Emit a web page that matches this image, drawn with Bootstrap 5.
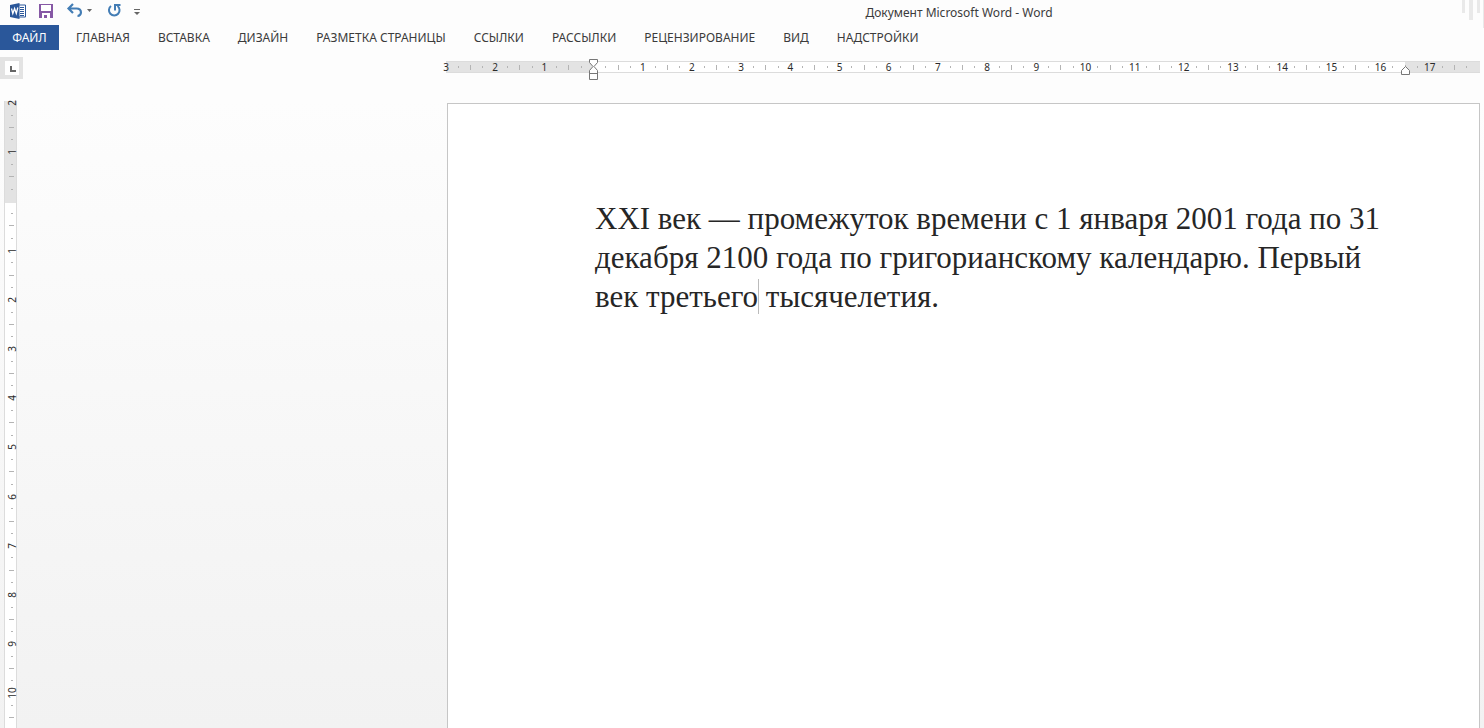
<!DOCTYPE html>
<html lang="ru">
<head>
<meta charset="utf-8">
<meta name="viewport" content="width=device-width, initial-scale=1">
<title>Документ Microsoft Word - Word</title>
<link href="https://cdn.jsdelivr.net/npm/bootstrap@5.3.0/dist/css/bootstrap.min.css" rel="stylesheet">
<style>
  body { font-family: "Noto Sans", "Open Sans", sans-serif; font-size: 12px; line-height: 16px; color: #3b3b3b; background: #fdfdfd; }
  .titlebar { height: 25px; }
  .quick { width: 458px; padding: 2px 0 0 9px; gap: 13px; height: 20px; }
  .quick .btn { border: 0; border-radius: 0; line-height: 0; }
  .doc-title { padding-top: 5px; }
  .deco { width: 24px; }
  .ribbon { height: 25px; }
  .file-tab { width: 59px; color: #fff; background: #2a579a; font-size: 12px; line-height: 16px; border-radius: 0; }
  .ribbon .nav-link { color: #3b3b3b; padding: 5px 0; line-height: 16px; }
  .tabs { gap: 28px; margin-left: 17px; }
  .ruler-row { height: 51px; padding-top: 7px; }
  .ruler-row, .workspace { display: grid; grid-template-columns: 446px 1fr; padding-right: 4px; }
  .tab-stop { width: 23px; height: 22px; background: #e3e3e3; border-radius: 0; }
  .scale { font-family: "Noto Sans", sans-serif; font-size: 10px; line-height: 12px; color: #2b2b2b; }
  .hruler { height: 12px; margin-top: 4px; padding: 0 13px 0 0; border: solid #dcdcdc; border-width: 1px 0;
    background: linear-gradient(90deg, #e3e3e3 14.2%, #fff 14.2%, #fff 92.7%, #e3e3e3 92.7%); }
  .vruler { width: 13px; margin-left: 4px; padding: 2px 0 10px; border: solid #dcdcdc; border-width: 0 1px;
    background: linear-gradient(#e3e3e3 16.3%, #fff 16.3%); }
  .mark-cell { width: 0; height: 10px; }
  .vruler .mark-cell { width: 13px; height: 0; }
  .vruler .num { transform: rotate(-90deg); }
  .tick { flex: none; background: #b4b4b4; width: 1px; height: 2px; }
  .tick.half { height: 5px; }
  .vruler .tick { width: 2px; height: 1px; }
  .vruler .tick.half { width: 5px; }
  .indent { left: 14.2%; top: -3px; margin-left: -4px; }
  .indent-right { left: 92.7%; top: 4px; margin-left: -4px; }
  .workspace { background: linear-gradient(#fdfdfd, #f2f2f2); }
  .sheet { margin: 2px 0 0 1px; padding: 95px 7% 0 147px; background: #fff; border: 1px solid #c6c6c6; border-bottom: 0;
    font-family: "Liberation Serif", serif; font-size: 31px; line-height: 39px; color: #262626; }
  .caret { border-left: 1px solid #bbb; margin-right: -1px; }
</style>
</head>
<body>
<div class="d-flex flex-column vh-100 overflow-hidden">
  <header>
    <div class="titlebar d-flex">
      <div class="quick d-flex align-items-center flex-shrink-0">
        <svg width="17" height="18" viewBox="0 0 17 18" role="img" aria-label="Word">
          <path d="M9 3h7.500v12H9z" fill="#fff" stroke="#2a579a"/>
          <path d="M11 5.500h4M11 7.500h4M11 9.500h4M11 11.500h4M11 13.500h4" stroke="#2a579a"/>
          <path d="M1 3l9.500-2v16L1 15z" fill="#2a579a"/>
          <path d="M2.500 6.500l1.300 5 1.800-5 1.700 5 1.500-6" fill="none" stroke="#fff" stroke-width="1.300"/>
        </svg>
        <button class="btn p-0" aria-label="Сохранить">
          <svg width="14" height="14" viewBox="0 0 14 14"><path d="M0 0h14v14H0z" fill="#8658a5"/><path d="M2 1h10v6H2zM3 9h8v5H3z" fill="#fff"/><path d="M5 11h3v3H5z" fill="#8658a5"/></svg>
        </button>
        <button class="btn p-0" aria-label="Отменить">
          <svg width="28" height="16" viewBox="0 0 28 16"><path d="M7 1L2.500 5.500 7 10M3 5.500h7.500c6 0 5.500 7.500 1 7.500" fill="none" stroke="#437db5" stroke-width="2.200"/><path d="M21 6h5l-2.500 3z" fill="#666"/></svg>
        </button>
        <button class="btn p-0" aria-label="Повторить">
          <svg width="14" height="16" viewBox="0 0 14 16"><path d="M4 3a5.300 5.300 0 1 0 6.500 0M8 7.500V2h5.500" fill="none" stroke="#437db5" stroke-width="2"/></svg>
        </button>
        <button class="btn p-0" aria-label="Настройка панели быстрого доступа">
          <svg width="6" height="14" viewBox="0 0 6 14"><path d="M0 5.500h6" stroke="#666"/><path d="M0 8h6l-3 3z" fill="#666"/></svg>
        </button>
      </div>
      <div class="doc-title flex-grow-1 text-center">Документ Microsoft Word - Word</div>
      <svg class="deco" height="28" viewBox="0 0 24 28" aria-hidden="true"><path d="M2 0h3v13H2zM9 0h4v20H9zM17 0h3v13h-3zM23 0h1v28h-1z" fill="#e9e9e9"/></svg>
    </div>
    <nav class="ribbon d-flex">
      <button class="btn file-tab p-0">ФАЙЛ</button>
      <ul class="nav tabs flex-nowrap text-nowrap">
        <li><a class="nav-link" href="#">ГЛАВНАЯ</a></li>
        <li><a class="nav-link" href="#">ВСТАВКА</a></li>
        <li><a class="nav-link" href="#">ДИЗАЙН</a></li>
        <li><a class="nav-link" href="#">РАЗМЕТКА СТРАНИЦЫ</a></li>
        <li><a class="nav-link" href="#">ССЫЛКИ</a></li>
        <li><a class="nav-link" href="#">РАССЫЛКИ</a></li>
        <li><a class="nav-link" href="#">РЕЦЕНЗИРОВАНИЕ</a></li>
        <li><a class="nav-link" href="#">ВИД</a></li>
        <li><a class="nav-link" href="#">НАДСТРОЙКИ</a></li>
      </ul>
    </nav>
  </header>
  <div class="ruler-row">
    <button class="btn tab-stop p-0 d-flex align-items-center justify-content-center" aria-label="Табуляция">
      <svg width="14" height="14" viewBox="0 0 14 14"><path d="M0 0h14v14H0z" fill="#fff"/><path d="M6 5v5h5" fill="none" stroke="#666" stroke-width="2"/></svg>
    </button>
    <div class="scale hruler position-relative d-flex justify-content-between" id="hruler">
      <svg class="indent position-absolute" width="10" height="22" viewBox="0 0 10 22"><path d="M.5.500h8v3L5 7.500 8.500 11.500v9h-8v-9L4 7.500.5 3.500zM.5 14.500h8" fill="#fff" stroke="#777"/></svg>
      <svg class="indent-right position-absolute" width="10" height="9" viewBox="0 0 10 9"><path d="M.5 8.500v-4l4-4 4 4v4z" fill="#fff" stroke="#777"/></svg>
    </div>
  </div>
  <main class="workspace flex-grow-1">
    <div class="scale vruler d-flex flex-column justify-content-between" id="vruler"></div>
    <div class="sheet" contenteditable="true" spellcheck="false">XXI век — промежуток времени с 1 января 2001 года по 31 декабря 2100 года по григорианскому календарю. Первый век третьего<span class="caret"></span> тысячелетия.</div>
  </main>
</div>
<script src="https://cdn.jsdelivr.net/npm/bootstrap@5.3.0/dist/js/bootstrap.bundle.min.js"></script>
<script>
  // Fills a ruler with quarter-centimetre marks; zero sits `before` centimetres from its start.
  function fillRuler(id, before, quarters) {
    const ruler = document.getElementById(id);
    for (let i = 0; i <= quarters; i++) {
      const cell = document.createElement('div');
      cell.className = 'mark-cell d-flex align-items-center justify-content-center';
      const mark = document.createElement('span');
      const cm = Math.abs(i / 4 - before);
      if (i % 4 === 0) {
        if (cm) { mark.className = 'num'; mark.textContent = cm; }
      } else {
        mark.className = i % 2 ? 'tick' : 'tick half';
      }
      cell.append(mark);
      ruler.append(cell);
    }
  }
  fillRuler('hruler', 3, 83);
  fillRuler('vruler', 2, 50);
</script>
</body>
</html>
